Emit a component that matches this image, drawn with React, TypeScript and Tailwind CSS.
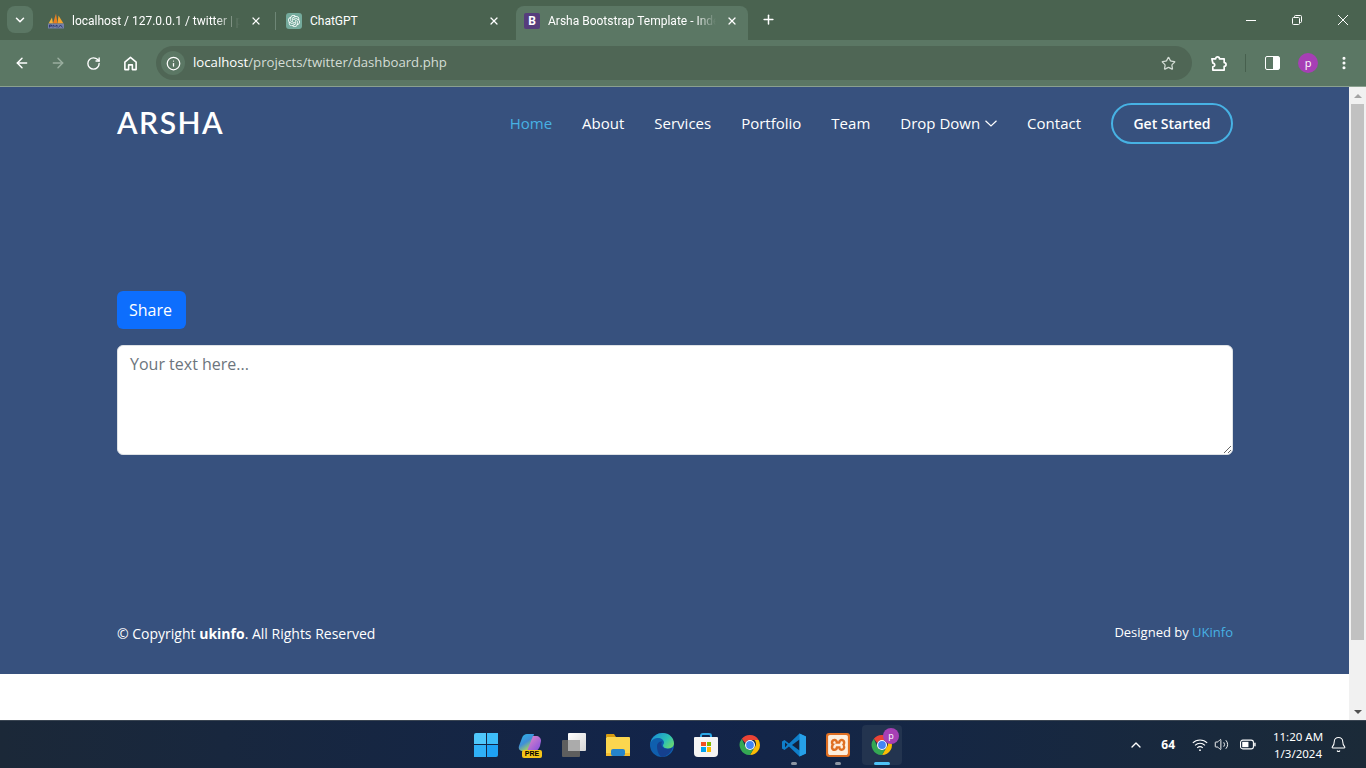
import React from 'react';
import { ArrowLeft, ArrowRight, RotateCw, Info, Star, ChevronDown, ChevronUp, X, Plus, EllipsisVertical, Bell, Volume2 } from 'lucide-react';
import { SiOpenai, SiXampp } from 'react-icons/si';

const navLinks = ['About', 'Services', 'Portfolio', 'Team'];

const PmaIcon = () => (
  <svg viewBox="0 0 16 16" className="w-4 h-4 shrink-0">
    <path d="M0.5 10.5 L4 4.5 L5 10.5Z" fill="#f4b33c" />
    <path d="M5 10.5 L8 0.5 L9.5 10.5Z" fill="#ee7f1f" />
    <path d="M9.5 10.5 L10.5 2.5 L15.5 10.5Z" fill="#f4a32c" />
    <rect x="0" y="10.5" width="16" height="5" rx="0.5" fill="#7480a8" />
    <path d="M1.5 14.5 V12 H3.5 V13.2 H1.5 M5 14.5 V12 L7 13.5 L9 12 V14.5 M10.5 14.5 L12.5 12 L14.5 14.5" fill="none" stroke="#24306a" strokeWidth="0.8" />
  </svg>
);

const ChromeIcon = () => (
  <svg viewBox="0 0 48 48" className="w-6 h-6">
    <path d="M24 4a20 20 0 0 1 17.3 10H24a10 10 0 0 0-9.4 6.6L7.6 11.6A20 20 0 0 1 24 4z" fill="#ea4335" />
    <path d="M41.3 14A20 20 0 0 1 24 44l8.7-15a10 10 0 0 0 0-15z" fill="#fbbc04" />
    <path d="M24 44A20 20 0 0 1 7.6 11.6l8 17.4A10 10 0 0 0 32.7 29z" fill="#34a853" />
    <circle cx="24" cy="24" r="10" fill="#fff" />
    <circle cx="24" cy="24" r="7.8" fill="#4285f4" />
  </svg>
);

const WindowsIcon = () => (
  <div className="grid grid-cols-2 gap-px w-6 h-6">
    <div className="bg-[#4fc7fb] rounded-tl-[2px]" />
    <div className="bg-[#3dbdf9]" />
    <div className="bg-[#2fb0f7]" />
    <div className="bg-[#1ea2f5] rounded-br-[2px]" />
  </div>
);

const CopilotIcon = () => (
  <div className="relative w-6 h-6">
    <svg viewBox="0 0 24 24" className="w-6 h-6">
      <defs>
        <linearGradient id="cpa" x1="0" y1="0" x2="0.6" y2="1">
          <stop offset="0" stopColor="#2bb7e8" />
          <stop offset="0.55" stopColor="#3f8fd8" />
          <stop offset="1" stopColor="#b6d94c" />
        </linearGradient>
        <linearGradient id="cpb" x1="0" y1="0" x2="1" y2="1">
          <stop offset="0" stopColor="#e88ac4" />
          <stop offset="1" stopColor="#7d4fe0" />
        </linearGradient>
      </defs>
      <path d="M9 1 h7 l-5 17 H5 c-3 0-5-2-4-5 l3-8 c1-3 3-4 5-4z" fill="url(#cpa)" />
      <path d="M15 3 h3 c3 0 5 2 5 5 l-1 5 c-1 3-3 5-6 5 h-7z" fill="url(#cpb)" />
    </svg>
    <span className="absolute left-[4px] top-[17px] w-[20px] h-[8px] rounded-[2px] bg-[#f5c518] text-[7px] leading-[8px] font-bold text-black text-center font-['Liberation_Sans',sans-serif]">PRE</span>
  </div>
);

const TaskViewIcon = () => (
  <div className="relative w-6 h-6">
    <div className="absolute left-[6px] top-0 w-[18px] h-[18px] rounded-[1px] bg-gradient-to-br from-white to-[#d6d6d6]" />
    <div className="absolute left-0 top-[7px] w-[18px] h-[17px] rounded-[1px] bg-[#5e5e5e]" />
    <div className="absolute left-[6px] top-[7px] w-[12px] h-[11px] bg-[#ababab]" />
  </div>
);

const FolderIcon = () => (
  <svg viewBox="0 0 24 24" className="w-6 h-6">
    <path d="M0 2 a1 1 0 0 1 1-1 h7 l2 3 H0z" fill="#d79c10" />
    <rect x="0" y="4" width="24" height="19" rx="1" fill="#fbd64f" />
    <rect x="0" y="20" width="24" height="3" fill="#f3bb2f" />
    <rect x="5" y="16" width="14" height="7" rx="2" fill="#2584cc" />
  </svg>
);

const EdgeIcon = () => (
  <svg viewBox="0 0 24 24" className="w-6 h-6">
    <defs>
      <linearGradient id="edg" x1="0" y1="0.2" x2="1" y2="0.8">
        <stop offset="0" stopColor="#1a8fd4" />
        <stop offset="0.6" stopColor="#2cc1b4" />
        <stop offset="1" stopColor="#6fd96a" />
      </linearGradient>
    </defs>
    <circle cx="12" cy="12" r="12" fill="#0f5fae" />
    <path d="M0.5 10 C2 3 8 0 12.5 0 c7 0 11.5 5 11.5 10.5 0 3-3 5-6 5 -3 0-5-1-5-3 0-1 1-1.500 1-3 0-3-3.500-5-7-4.500 -3 0.500-5.500 2-6.500 5z" fill="url(#edg)" />
    <path d="M7 13 c0-3 2.500-5 5.500-4.500 -1.500 1.500-1.500 4 0 5.500 2.500 2.500 7 2.500 10 0.500 -1 5-6 9-10.500 9.500 c-3-1-5-6-5-11z" fill="#15408f" />
  </svg>
);

const StoreIcon = () => (
  <div className="relative w-6 h-6">
    <div className="absolute left-[6px] top-0 w-[12px] h-[8px] rounded-t-[3px] border-2 border-b-0 border-[#2aa7e6]" />
    <div className="absolute left-0 top-[4px] w-6 h-5 rounded-b-[4px] rounded-t-[1px] bg-[#f4f4f4]" />
    <div className="absolute left-[7px] top-[9px] grid grid-cols-2 gap-px w-[10px] h-[10px]">
      <div className="bg-[#f25022]" />
      <div className="bg-[#7fba00]" />
      <div className="bg-[#00a4ef]" />
      <div className="bg-[#ffb900]" />
    </div>
  </div>
);

const VsCodeIcon = () => (
  <svg viewBox="0 0 24 24" className="w-6 h-6">
    <path d="M17.5 0.5 L24 3.5 V20.500 L17.500 23.500 L7 13.500 L2.500 17 L0 15.500 V8.500 L2.500 7 L7 10.500Z" fill="#0f7ec9" />
    <path d="M17.5 6.500 V17.500 L10 12Z" fill="#13233f" />
    <path d="M17.5 0.500 L24 3.500 V20.500 L17.500 23.500Z" fill="#26a0e8" />
    <path d="M3 9.500 L5.500 11.500 L3 14.500Z" fill="#13233f" />
  </svg>
);

const XamppIcon = () => (
  <div className="w-6 h-6 rounded-[3px] bg-[#df6f22] flex items-center justify-center">
    <SiXampp className="w-5 h-5 text-[#fdeedd]" />
  </div>
);

const TabClose = () => <X size={12} strokeWidth={2.4} className="text-white" />;

export default function App() {
  return (
    <div className="h-screen w-full flex flex-col overflow-hidden bg-white font-['Open_Sans',sans-serif]">
      {/* tab strip */}
      <div className="h-10 shrink-0 bg-[#4a6350] flex items-start pt-[6px] pl-[7px] text-white text-xs font-['Roboto',sans-serif]">
        <div className="w-[26px] h-[27px] mr-[7px] rounded-lg bg-[#5b7764] flex items-center justify-center">
          <ChevronDown size={14} strokeWidth={2.6} />
        </div>
        <div className="w-[238px] h-[30px] pl-2 flex items-center relative">
          <PmaIcon />
          <span className="ml-2 w-[168px] whitespace-nowrap overflow-hidden [mask-image:linear-gradient(to_right,black_85%,transparent)]">localhost / 127.0.0.1 / twitter | phpMyAdmin</span>
          <span className="ml-[10px]"><TabClose /></span>
          <div className="absolute right-[2px] top-[6px] w-px h-[18px] bg-[#6e8676]" />
        </div>
        <div className="w-[238px] h-[30px] pl-2 flex items-center">
          <div className="w-4 h-4 rounded-[3px] bg-[#74aa9c] flex items-center justify-center"><SiOpenai className="w-3 h-3 text-white" /></div>
          <span className="ml-2 w-[176px]">ChatGPT</span>
          <span className="ml-[2px]"><TabClose /></span>
        </div>
        <div className="w-[232px] h-[34px] pl-2 pb-1 flex items-center rounded-t-lg bg-[#5b7764]">
          <div className="w-4 h-4 rounded-[2px] bg-[#563d7c] flex items-center justify-center text-[12px] font-bold leading-none">B</div>
          <span className="ml-2 w-[168px] whitespace-nowrap overflow-hidden [mask-image:linear-gradient(to_right,black_88%,transparent)]">Arsha Bootstrap Template - Index</span>
          <span className="ml-[10px]"><TabClose /></span>
        </div>
        <div className="ml-[13px] mt-[6px]"><Plus size={15} strokeWidth={2.4} /></div>
        <div className="ml-auto flex items-center h-[28px] text-white">
          <div className="w-[46px] flex justify-center"><div className="w-[10px] h-px bg-white" /></div>
          <div className="w-[46px] flex justify-center">
            <svg viewBox="0 0 10 10" className="w-[10px] h-[10px]" fill="none" stroke="white" strokeWidth="1">
              <rect x="0.5" y="2.5" width="7" height="7" rx="1" />
              <path d="M2.5 2.5 V1.5 a1 1 0 0 1 1-1 H8.5 a1 1 0 0 1 1 1 V6.5 a1 1 0 0 1-1 1 H7.5" />
            </svg>
          </div>
          <div className="w-[46px] flex justify-center">
            <svg viewBox="0 0 10 10" className="w-[10px] h-[10px]" stroke="white" strokeWidth="1"><path d="M0 0 L10 10 M10 0 L0 10" /></svg>
          </div>
        </div>
      </div>

      {/* toolbar */}
      <div className="h-[47px] shrink-0 bg-[#5b7764] border-b border-[#8aa08f] flex items-center pl-[14px] text-white">
        <ArrowLeft size={16} strokeWidth={2.2} />
        <ArrowRight size={16} strokeWidth={2.2} className="ml-5 text-[#9aae9f]" />
        <RotateCw size={15} strokeWidth={2.2} className="ml-5" />
        <svg viewBox="0 0 16 16" className="w-[15px] h-[15px] ml-[22px]" fill="none" stroke="white" strokeWidth="1.7">
          <path d="M2 14.5 V6.5 L8 1.5 L14 6.5 V14.5 H10 V9.5 H6 V14.5Z" strokeLinejoin="round" />
        </svg>
        <div className="ml-[18px] w-[1036px] h-[34px] rounded-full bg-[#4f6655] flex items-center pl-[5px] pr-4">
          <div className="w-6 h-6 rounded-full bg-[#5b7764] flex items-center justify-center"><Info size={15} strokeWidth={2} /></div>
          <span className="ml-2 text-[13.2px] text-[#d4ddd6]"><span className="text-white">localhost</span>/projects/twitter/dashboard.php</span>
          <Star size={15} strokeWidth={2} className="ml-auto text-[#d3dcd5]" />
        </div>
        <svg viewBox="0 0 18 18" className="w-[17px] h-[17px] ml-[18px]" fill="none" stroke="white" strokeWidth="1.8" strokeLinejoin="round">
          <path d="M2 4 H6 a2 2 0 0 1 4 0 H15 V8 a2 2 0 0 1 0 4 V16 H3 V12.5 a2 2 0 0 0 0-4 Z" />
        </svg>
        <div className="ml-[18px] w-px h-[18px] bg-[#47604e]" />
        <div className="ml-[19px] w-[15px] h-[14px] rounded-[2px] border-[1.5px] border-white flex justify-end"><div className="w-[6px] h-full bg-white" /></div>
        <div className="ml-[18px] w-5 h-5 rounded-full bg-[#a63fb5] flex items-center justify-center text-[11px] leading-none pb-[2px]">p</div>
        <EllipsisVertical size={16} strokeWidth={2.6} className="ml-[18px]" />
      </div>

      {/* page */}
      <div className="flex-1 flex min-h-0">
        <div className="flex-1 min-w-0 flex flex-col">
          <div className="h-[587px] shrink-0 bg-[#37517e] pl-[117px] pr-[116px] flex flex-col text-white">
            <header className="h-[73px] flex items-center">
              <div className="text-[30px] font-['Lato',sans-serif] font-semibold tracking-[1.5px] leading-none -mt-[3px]">ARSHA</div>
              <nav className="ml-auto flex items-center gap-[30px] text-[15px] font-medium">
                <a className="text-[#47b2e4]">Home</a>
                {navLinks.map((l) => <a key={l}>{l}</a>)}
                <a className="flex items-center gap-[5px]">
                  Drop Down
                  <svg viewBox="0 0 12 7" className="w-3 h-[7px]" fill="none" stroke="white" strokeWidth="1.2"><path d="M0.5 0.8 L6 6 L11.500 0.8" /></svg>
                </a>
                <a>Contact</a>
                <a className="w-[122px] h-[41px] rounded-full border-2 border-[#47b2e4] flex items-center justify-center text-sm font-semibold">Get Started</a>
              </nav>
            </header>
            <button className="mt-[131px] self-start h-[38px] w-[69px] pl-3 text-left rounded-md bg-[#0d6efd] text-base text-white">Share</button>
            <textarea
              className="mt-4 h-[110px] w-full rounded-md border border-[#dee2e6] bg-white px-3 py-[6px] text-base text-[#212529] placeholder:text-[#6c757d] outline-none"
              placeholder="Your text here..."
            />
            <footer className="mt-auto pb-[30px] flex items-center justify-between">
              <div className="text-sm">© Copyright <strong className="font-bold">ukinfo</strong>. All Rights Reserved</div>
              <div className="text-[13px] -mt-[3px]">Designed by <span className="text-[#47b2e4]">UKinfo</span></div>
            </footer>
          </div>
        </div>
        {/* scrollbar */}
        <div className="w-[17px] shrink-0 bg-[#f1f1f1] flex flex-col items-center">
          <div className="h-[17px] w-full flex items-center justify-center">
            <div className="w-0 h-0 border-l-[4px] border-r-[4px] border-b-[4px] border-l-transparent border-r-transparent border-b-[#a3a3a3]" />
          </div>
          <div className="h-[536px] w-[13px] bg-[#c1c1c1]" />
          <div className="mt-auto h-[17px] w-full flex items-center justify-center">
            <div className="w-0 h-0 border-l-[4px] border-r-[4px] border-t-[4px] border-l-transparent border-r-transparent border-t-[#505050]" />
          </div>
        </div>
      </div>

      {/* taskbar */}
      <div className="h-12 shrink-0 relative bg-gradient-to-r from-[#1b2838] via-[#12244a] to-[#1b2a38] border-t border-[#3a4552] flex items-center justify-center text-white">
        <div className="flex items-center gap-5 ml-[2px]">
          <WindowsIcon />
          <CopilotIcon />
          <TaskViewIcon />
          <FolderIcon />
          <EdgeIcon />
          <StoreIcon />
          <ChromeIcon />
          <div className="relative">
            <VsCodeIcon />
            <div className="absolute -bottom-[8px] left-[9px] w-[6px] h-[3px] rounded-full bg-[#8d96a3]" />
          </div>
          <div className="relative">
            <XamppIcon />
            <div className="absolute -bottom-[8px] left-[9px] w-[6px] h-[3px] rounded-full bg-[#8d96a3]" />
          </div>
          <div className="relative">
            <div className="absolute -left-2 -right-2 -top-2 -bottom-2 rounded-[4px] bg-[#23344f]" />
            <div className="relative"><ChromeIcon /></div>
            <div className="absolute -right-[5px] -top-[5px] w-4 h-4 rounded-full bg-[#a63fb5] flex items-center justify-center text-[9px] leading-none pb-[1px]">p</div>
            <div className="absolute -bottom-[8px] left-[4px] w-4 h-[3px] rounded-full bg-[#4fc3f7]" />
          </div>
        </div>
        <div className="absolute right-0 top-0 h-full flex items-center">
          <ChevronUp size={16} strokeWidth={2} />
          <span className="ml-[17px] text-xs font-bold">64</span>
          <svg viewBox="0 0 16 14" className="ml-[17px] w-4 h-[14px]" fill="none" stroke="white" strokeWidth="1.1">
            <path d="M0.8 5 C4.5 1 11.5 1 15.2 5" />
            <path d="M3 7.4 C6 4.6 10 4.6 13 7.4" />
            <path d="M5.2 9.8 C6.8 8.4 9.2 8.4 10.8 9.8" />
            <circle cx="8" cy="12.2" r="0.9" fill="white" stroke="none" />
          </svg>
          <Volume2 size={15} strokeWidth={1.5} className="ml-[6px]" />
          <svg viewBox="0 0 18 11" className="ml-[11px] w-4 h-[11px]" fill="none" stroke="white" strokeWidth="1.2">
            <rect x="0.6" y="0.6" width="14.5" height="9.8" rx="2.5" />
            <rect x="2.5" y="2.5" width="7" height="6" fill="white" stroke="none" />
            <rect x="16" y="3.5" width="1.6" height="4" fill="white" stroke="none" />
          </svg>
          <div className="ml-[16px] w-[52px] text-[11.5px] leading-[17px] text-center font-['Noto_Sans',sans-serif] whitespace-nowrap flex flex-col items-center">
            <span>11:20 AM</span>
            <span>1/3/2024</span>
          </div>
          <Bell size={17} strokeWidth={1.5} className="ml-[6px] mr-[19px]" />
        </div>
      </div>
    </div>
  );
}
